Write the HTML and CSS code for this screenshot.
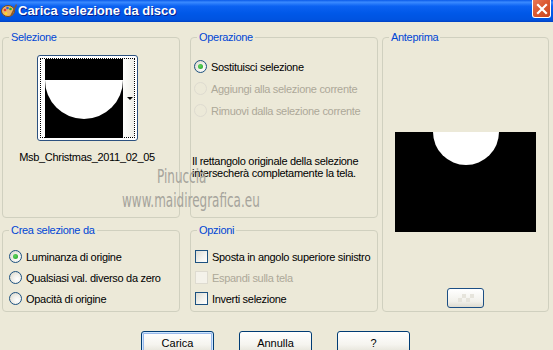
FILE: index.html
```html
<!DOCTYPE html>
<html lang="it">
<head>
    <meta charset="UTF-8">
    <title>Carica selezione da disco</title>
    <link rel="stylesheet" href="styles.css">
</head>
<body>
    <div class="window">
        <div class="title-bar">
            <div class="title-left">
                <svg class="app-icon" width="16" height="16" viewBox="0 0 16 16">
                    <ellipse cx="7" cy="9" rx="6.5" ry="5.5" fill="#e9b46a" stroke="#7a4a1c" stroke-width="1"/>
                    <circle cx="4" cy="8" r="1.3" fill="#e33"/>
                    <circle cx="6.5" cy="6" r="1.3" fill="#2a5ce0"/>
                    <circle cx="9.5" cy="7" r="1.3" fill="#2b2"/>
                    <circle cx="5" cy="11.5" r="1.3" fill="#fd2"/>
                    <path d="M9 14 L15 2 L16 3 L11 14 Z" fill="#8a5a2a"/>
                </svg>
                <span class="title-text">Carica selezione da disco</span>
            </div>
            <div class="close-btn">
                <svg width="12" height="12" viewBox="0 0 12 12">
                    <path d="M2 2 L10 10 M10 2 L2 10" stroke="#fff" stroke-width="2.2" stroke-linecap="square"/>
                </svg>
            </div>
        </div>

        <div class="dialog-body">
            <div class="groups">
                <fieldset class="group group-selection">
                    <legend>Selezione</legend>
                    <div class="thumb">
                        <div class="thumb-focus">
                            <svg class="thumb-img" width="78" height="79" viewBox="0 0 78 79">
                                <rect width="78" height="79" fill="#000"/>
                                <path d="M0 21 A39 39 0 0 0 78 21 Z" fill="#fff"/>
                            </svg>
                            <div class="thumb-strip">
                                <span class="thumb-arrow"></span>
                            </div>
                        </div>
                    </div>
                    <div class="thumb-name">Msb_Christmas_2011_02_05</div>
                </fieldset>

                <fieldset class="group group-operation">
                    <legend>Operazione</legend>
                    <div class="option-list">
                        <label class="option"><span class="radio checked"></span>Sostituisci selezione</label>
                        <label class="option disabled"><span class="radio"></span>Aggiungi alla selezione corrente</label>
                        <label class="option disabled"><span class="radio"></span>Rimuovi dalla selezione corrente</label>
                    </div>
                    <p class="note">Il rettangolo originale della selezione<br>intersecherà completamente la tela.</p>
                </fieldset>

                <fieldset class="group group-preview">
                    <legend>Anteprima</legend>
                    <div class="preview-area">
                        <svg class="preview-img" width="141" height="100" viewBox="0 0 141 100">
                            <rect width="141" height="100" fill="#000"/>
                            <path d="M38 0 A33 33 0 0 0 104 0 Z" fill="#fff"/>
                        </svg>
                    </div>
                    <div class="preview-btn-row">
                        <button class="small-btn"><span class="checker"></span></button>
                    </div>
                </fieldset>

                <fieldset class="group group-source">
                    <legend>Crea selezione da</legend>
                    <div class="option-list tight">
                        <label class="option"><span class="radio checked"></span>Luminanza di origine</label>
                        <label class="option"><span class="radio"></span>Qualsiasi val. diverso da zero</label>
                        <label class="option"><span class="radio"></span>Opacità di origine</label>
                    </div>
                </fieldset>

                <fieldset class="group group-options">
                    <legend>Opzioni</legend>
                    <div class="option-list tight">
                        <label class="option"><span class="checkbox"></span>Sposta in angolo superiore sinistro</label>
                        <label class="option disabled"><span class="checkbox"></span>Espandi sulla tela</label>
                        <label class="option"><span class="checkbox"></span>Inverti selezione</label>
                    </div>
                </fieldset>
            </div>

            <div class="button-row">
                <button class="btn default">Carica</button>
                <button class="btn">Annulla</button>
                <button class="btn">?</button>
            </div>

            <div class="watermark">
                <div class="wm-name">Pinuccia</div>
                <div class="wm-url">www.maidiregrafica.eu</div>
            </div>
        </div>
    </div>
</body>
</html>
```

FILE: styles.css
```css
* {
    margin: 0;
    padding: 0;
    box-sizing: border-box;
}

body {
    width: 553px;
    height: 350px;
    overflow: hidden;
    background: #ece9d8;
    font-family: "Liberation Sans", Arial, sans-serif;
    font-size: 11px;
    letter-spacing: -0.3px;
    color: #000;
}

.window {
    width: 553px;
    height: 350px;
    display: flex;
    flex-direction: column;
}

/* Title bar */
.title-bar {
    height: 22px;
    flex: none;
    display: flex;
    justify-content: space-between;
    align-items: flex-start;
    background: linear-gradient(to bottom, #0a5ae8 0%, #3a8aff 10%, #0b62f2 28%, #0058e8 60%, #0053e0 90%, #0040c2 100%);
}

.title-left {
    display: flex;
    align-items: center;
    height: 20px;
    padding-left: 1px;
    gap: 1px;
}

.title-text {
    font-family: "Liberation Sans", Arial, sans-serif;
    font-weight: bold;
    font-size: 13px;
    letter-spacing: 0;
    color: #fff;
    text-shadow: 1px 1px 0 #0a1e8c;
}

.close-btn {
    width: 19px;
    height: 18px;
    margin-right: 2px;
    border: 1px solid #fff;
    border-top: none;
    border-radius: 0 0 3px 3px;
    background: linear-gradient(135deg, #e97a5a 0%, #dc5a32 45%, #c94520 100%);
    display: flex;
    align-items: center;
    justify-content: center;
}

/* Body */
.dialog-body {
    position: relative;
    flex: 1;
    padding: 9px 4px 0 2px;
}

.groups {
    display: grid;
    grid-template-columns: 178px 188px 167px;
    grid-template-rows: 187px 88px;
    column-gap: 10px;
    row-gap: 6px;
}

.groups .group-preview {
    grid-column: 3;
    grid-row: 1 / span 2;
    margin-left: -6px;
    width: 167px;
}

.group {
    border: 1px solid #d0d0bf;
    border-radius: 4px;
    padding: 0 6px;
    min-width: 0;
}

.group legend {
    color: #0046d5;
    margin-left: 0;
    padding: 0 2px;
    line-height: 13px;
}

/* Selection thumbnail */
.group-selection {
    display: flex;
    flex-direction: column;
    align-items: center;
    padding: 0 10px 0 2px;
}

.group-selection legend {
    margin-left: 4px;
}

.thumb {
    width: 101px;
    height: 86px;
    margin: 11px auto 0;
    border: 1px solid #2c5180;
    border-radius: 3px;
    padding: 2px;
    background: #fff;
}

.thumb-focus {
    height: 100%;
    border: 1px dotted #000;
    display: flex;
    padding-left: 4px;
}

.thumb-img {
    display: block;
}

.thumb-strip {
    flex: 1;
    background: linear-gradient(to right, #fdfdfb, #eeeee8);
    position: relative;
}

.thumb-arrow {
    position: absolute;
    right: 1px;
    top: 38px;
    border-left: 3px solid transparent;
    border-right: 3px solid transparent;
    border-top: 3px solid #000;
}

.thumb-name {
    text-align: center;
    margin-top: 10px;
}

/* Radio and checkbox lists */
.option-list {
    display: flex;
    flex-direction: column;
    gap: 9px;
    margin-top: 16px;
    margin-left: -3px;
}

.option-list.tight {
    margin-top: 13px;
    gap: 8px;
    margin-left: 0;
}

.group-options .option-list.tight {
    margin-left: -2px;
}

.option {
    display: flex;
    align-items: center;
    gap: 4px;
    height: 13px;
    white-space: nowrap;
}

.option.disabled {
    color: #aca899;
}

.radio {
    flex: none;
    width: 13px;
    height: 13px;
    border-radius: 50%;
    border: 1px solid #1c5180;
    background: radial-gradient(circle at 65% 65%, #ffffff 0%, #f2f1ec 40%, #d6d3c6 100%);
    display: flex;
    align-items: center;
    justify-content: center;
}

.radio.checked::after {
    content: "";
    width: 5px;
    height: 5px;
    border-radius: 50%;
    background: radial-gradient(circle at 40% 40%, #5fd35f, #21a121);
}

.option.disabled .radio {
    border-color: #dedbd0;
    background: #ece9d8;
}

.checkbox {
    flex: none;
    width: 13px;
    height: 13px;
    border: 1px solid #1c5180;
    background: linear-gradient(135deg, #dcdcd4 0%, #f4f4f0 60%, #ffffff 100%);
}

.option.disabled .checkbox {
    border-color: #dedbd0;
    background: #f4f2ea;
}

.note {
    margin-top: 38px;
    line-height: 12px;
    margin-left: -5px;
    white-space: nowrap;
}

/* Preview */
.group-preview {
    display: flex;
    flex-direction: column;
}

.preview-area {
    display: flex;
    justify-content: center;
    margin-top: 88px;
}

.preview-img {
    display: block;
}

.preview-btn-row {
    display: flex;
    justify-content: center;
    margin-top: 56px;
}

.small-btn {
    width: 37px;
    height: 20px;
    border: 1px solid #1c4f84;
    border-radius: 3px;
    background: linear-gradient(to bottom, #ffffff, #f1f0ea 70%, #dedbcf);
    display: flex;
    align-items: center;
    justify-content: center;
}

.checker {
    width: 16px;
    height: 8px;
    background:
        linear-gradient(45deg, #e6e4dc 25%, transparent 25%, transparent 75%, #e6e4dc 75%),
        linear-gradient(45deg, #e6e4dc 25%, transparent 25%, transparent 75%, #e6e4dc 75%);
    background-size: 8px 8px;
    background-position: 0 0, 4px 4px;
}

/* Bottom buttons */
.button-row {
    display: flex;
    gap: 25px;
    padding-left: 139px;
    margin-top: 19px;
}

.btn {
    width: 73px;
    height: 23px;
    border: 1px solid #003c74;
    border-radius: 3px;
    background: linear-gradient(to bottom, #ffffff 0%, #f5f4ef 60%, #e3e1d6 100%);
    font-family: "Liberation Sans", Arial, sans-serif;
    font-size: 11px;
    color: #000;
}

.btn.default {
    box-shadow: inset 0 0 0 1px #cee7ff, inset 0 0 0 2px #98b8ea;
}

/* Watermark overlay */
.watermark {
    position: absolute;
    left: 122px;
    top: 142px;
    color: #a6a49c;
    font-family: "DejaVu Sans", sans-serif;
    letter-spacing: 0;
    pointer-events: none;
}

.wm-name {
    font-size: 20px;
    margin-left: 35px;
    transform: scaleX(0.6);
    transform-origin: left;
    line-height: 24px;
}

.wm-url {
    font-size: 20px;
    transform: scaleX(0.6);
    transform-origin: left;
    line-height: 24px;
    white-space: nowrap;
}
```
